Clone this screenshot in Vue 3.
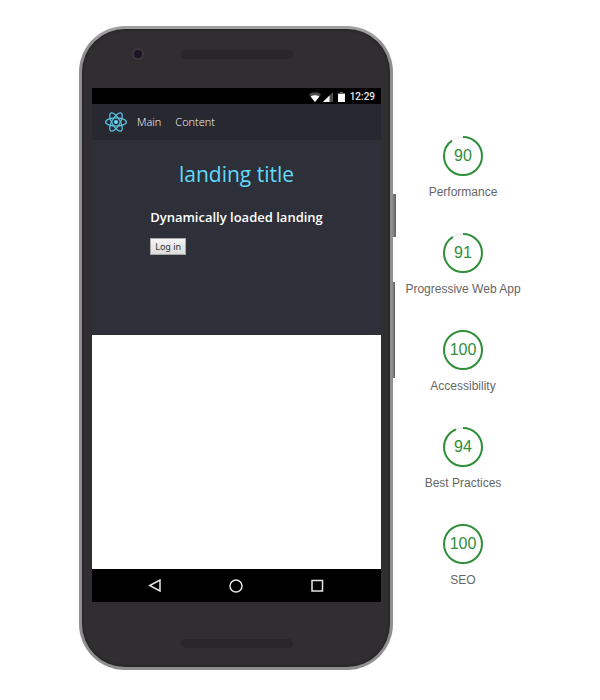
<script setup>
const links = ['Main', 'Content']

const scores = [
  { label: 'Performance', value: 90 },
  { label: 'Progressive Web App', value: 91 },
  { label: 'Accessibility', value: 100 },
  { label: 'Best Practices', value: 94 },
  { label: 'SEO', value: 100 },
]
</script>

<template>
  <main class="page">
    <section class="phone" aria-label="App preview">
      <span class="side-button power"></span>
      <span class="side-button volume"></span>

      <div class="bezel bezel-top">
        <span class="camera"></span>
        <span class="speaker"></span>
      </div>

      <div class="screen">
        <div class="status-bar">
          <svg class="status-icon" width="12" height="10" viewBox="0 0 12 10" aria-hidden="true">
            <path d="M6 10 0 2.4C3.4-.5 8.6-.5 12 2.4Z" fill="#4a4a4a" />
            <path d="M6 10 1.600 4.500C4.300 2.800 7.700 2.800 10.400 4.500Z" fill="#fff" />
          </svg>
          <svg class="status-icon signal" width="10" height="10" viewBox="0 0 10 10" aria-hidden="true">
            <path d="M10 0V10H0Z" fill="#4c4c4c" />
            <path d="M6.500 3.500V10H0Z" fill="#fff" />
          </svg>
          <svg class="status-icon battery" width="7" height="10" viewBox="0 0 7 10" aria-hidden="true">
            <path d="M2 0H5V1H7V3H0V1H2Z" fill="#666" />
            <path d="M0 2H7V10H0Z" fill="#fff" />
          </svg>
          <time class="clock">12:29</time>
        </div>

        <nav class="app-nav">
          <svg class="logo" width="22" height="20" viewBox="-11.500 -10.300 23 20.600" aria-hidden="true">
            <circle r="2.200" fill="#61dafb" />
            <g fill="none" stroke="#5cc4e2" stroke-width="1.300">
              <ellipse rx="10.800" ry="4.200" />
              <ellipse rx="10.800" ry="4.200" transform="rotate(60)" />
              <ellipse rx="10.800" ry="4.200" transform="rotate(120)" />
            </g>
          </svg>
          <a v-for="link in links" :key="link" class="nav-link" href="#">{{ link }}</a>
        </nav>

        <div class="hero">
          <h1 class="title">landing title</h1>
          <div class="hero-body">
            <h2 class="subtitle">Dynamically loaded landing</h2>
            <button class="login" type="button">Log in</button>
          </div>
        </div>

        <div class="blank"></div>

        <div class="system-nav">
          <button class="system-button" type="button" aria-label="Back">
            <svg width="14" height="14" viewBox="0 0 14 14" aria-hidden="true">
              <path d="M12 1V12L1.700 6.500Z" />
            </svg>
          </button>
          <button class="system-button" type="button" aria-label="Home">
            <svg width="14" height="14" viewBox="0 0 14 14" aria-hidden="true">
              <circle cx="7" cy="7" r="6" />
            </svg>
          </button>
          <button class="system-button" type="button" aria-label="Overview">
            <svg width="14" height="14" viewBox="0 0 14 14" aria-hidden="true">
              <rect x="2" y="1.500" width="10.500" height="10.500" />
            </svg>
          </button>
        </div>
      </div>

      <div class="bezel bezel-bottom">
        <span class="speaker"></span>
      </div>
    </section>

    <ul class="scores">
      <li v-for="score in scores" :key="score.label" class="score">
        <div class="gauge">
          <svg class="ring" viewBox="0 0 40 40" aria-hidden="true">
            <circle class="track" cx="20" cy="20" r="19" />
            <circle
              class="arc"
              cx="20"
              cy="20"
              r="19"
              pathLength="100"
              :stroke-dasharray="`${score.value} 100`"
              transform="rotate(-90 20 20)"
            />
          </svg>
          <span class="value">{{ score.value }}</span>
        </div>
        <span class="label">{{ score.label }}</span>
      </li>
    </ul>
  </main>
</template>

<style>
body {
  margin: 0;
  background: #fff;
}
</style>

<style scoped>
.page {
  display: flex;
  justify-content: center;
  align-items: flex-start;
  gap: 12px;
  padding: 26px 16px;
  font-family: "Open Sans", "Noto Sans", sans-serif;
}

.phone {
  position: relative;
  box-sizing: border-box;
  flex: 0 1 314px;
  padding: 0 9px 0 10px;
  border: 3px solid #8f8f8f;
  border-top-color: #a09fa0;
  border-radius: 46px;
  background: #312e31;
  box-shadow: inset 0 0 2px 1px #222;
}

.side-button {
  position: absolute;
  left: 100%;
  margin-left: 2px;
  background: linear-gradient(90deg, #929292, #606060);
}

.power {
  top: 165px;
  width: 4px;
  height: 43px;
}

.volume {
  top: 253px;
  width: 3px;
  height: 96px;
}

.bezel {
  position: relative;
  display: flex;
  justify-content: center;
}

.bezel-top {
  padding: 21px 0 29px;
}

.bezel-bottom {
  padding: 37px 0 19px;
}

.speaker {
  width: 112px;
  height: 9px;
  border-radius: 5px;
  background: #282628;
}

.camera {
  position: absolute;
  top: 19px;
  left: 40px;
  box-sizing: border-box;
  width: 12px;
  height: 12px;
  border: 2px solid #3b373b;
  border-radius: 50%;
  background: #1e1329;
}

.screen {
  background: #fff;
}

.status-bar {
  display: flex;
  justify-content: flex-end;
  align-items: center;
  height: 16px;
  padding: 0 6px;
  background: #000;
}

.status-icon {
  display: block;
  margin-top: 2px;
}

.signal {
  margin-left: 2px;
}

.battery {
  margin-left: 5px;
}

.clock {
  margin: 2px 0 0 5px;
  color: #e8e8e8;
  font: 500 10px/14px Roboto, sans-serif;
}

.app-nav {
  display: flex;
  align-items: center;
  height: 36px;
  padding: 0 13px;
  background: #282831;
}

.logo {
  display: block;
  margin-right: 3px;
}

.nav-link {
  padding: 0 7px;
  color: #fff;
  font-size: 11px;
  font-weight: 300;
  line-height: 18px;
  text-decoration: none;
}

.hero {
  box-sizing: border-box;
  min-height: 195px;
  padding: 20px;
  background: #2d3038;
  text-align: center;
}

.title {
  margin: 0 0 20px;
  color: #61dafb;
  font-size: 21px;
  font-weight: 400;
  line-height: 28px;
}

.hero-body {
  display: flex;
  flex-direction: column;
  align-items: flex-start;
  width: fit-content;
  margin: 0 auto;
}

.subtitle {
  margin: 0 0 12px;
  color: #fff;
  font-size: 13px;
  font-weight: 600;
  line-height: 18px;
}

.login {
  box-sizing: border-box;
  height: 17px;
  padding: 0 4px;
  border: 1px solid #a9a9a9;
  border-radius: 0;
  background: linear-gradient(#f4f4f4, #dcdcdc);
  color: #333;
  font: 9px/15px "Noto Sans", sans-serif;
}

.blank {
  height: 234px;
}

.system-nav {
  display: flex;
  justify-content: center;
  align-items: center;
  gap: 67px;
  height: 33px;
  padding-right: 1px;
  background: #000;
}

.system-button {
  padding: 0;
  border: 0;
  background: none;
}

.system-button svg {
  display: block;
  fill: none;
  stroke: #e6e6e6;
  stroke-width: 1.5;
}

.scores {
  display: flex;
  flex: 0 0 auto;
  flex-direction: column;
  gap: 33px;
  min-width: 116px;
  margin: 110px 0 0;
  padding: 0;
  list-style: none;
  font-family: "Liberation Sans", Arial, sans-serif;
}

.score {
  display: flex;
  flex-direction: column;
  align-items: center;
  gap: 8px;
}

.gauge {
  display: grid;
  place-items: center;
  width: 40px;
  height: 40px;
}

.ring,
.value {
  grid-area: 1 / 1;
}

.ring {
  width: 40px;
  height: 40px;
  fill: none;
}

.track {
  stroke: #dfe5df;
  stroke-width: 1;
}

.arc {
  stroke: #2f8f3a;
  stroke-width: 2;
}

.value {
  color: #2f8f3a;
  font-size: 16px;
  line-height: 20px;
}

.label {
  color: #666;
  font-size: 12px;
  line-height: 16px;
}
</style>
